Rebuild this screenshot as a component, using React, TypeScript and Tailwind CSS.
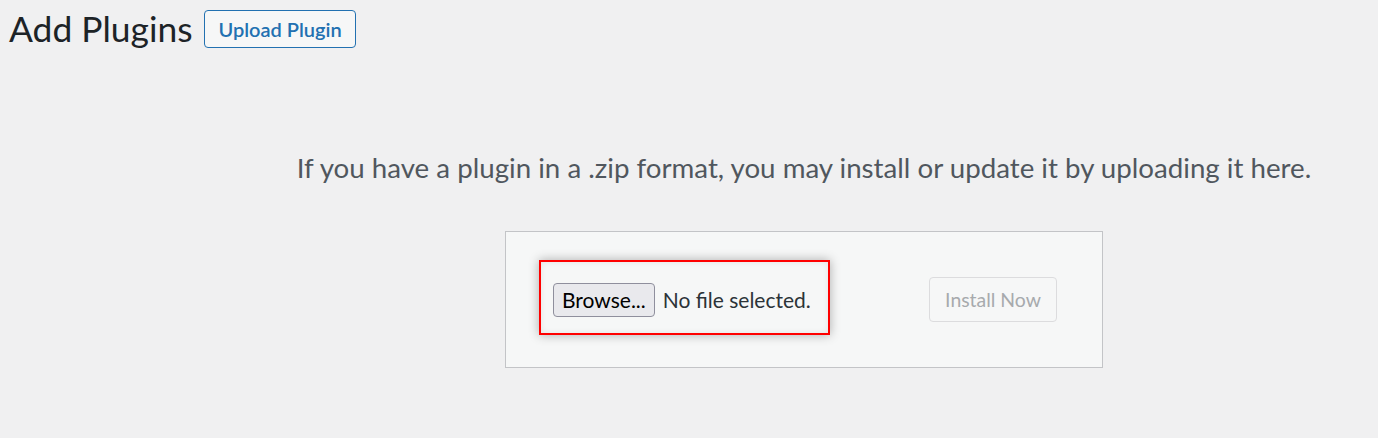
const font = { fontFamily: 'Lato, "Noto Sans", sans-serif' };

export default function App() {
  return (
    <div className="min-h-[438px] w-full bg-[#f0f0f1] text-[#1d2327]" style={font}>
      {/* Header */}
      <div className="flex items-center pl-[9px] pt-[10px]">
        <h1 className="text-[35.4px] font-normal leading-[38px]">Add Plugins</h1>
        <button className="ml-[12px] h-[38px] rounded-[4px] border border-[#2271b1] bg-[#f6f7f7] px-[13px] text-[20px] font-semibold text-[#2271b1]">
          Upload Plugin
        </button>
      </div>

      {/* Upload area */}
      <div className="flex flex-col items-center pl-[230px]">
        <p className="mt-[105px] text-[27.7px] leading-[30px] text-[#50575e]">
          If you have a plugin in a .zip format, you may install or update it by uploading it here.
        </p>

        <div className="mt-[48px] flex h-[137px] w-[598px] items-center justify-between border border-[#c3c4c7] bg-[#f6f7f7] pl-[33px] pr-[45px]">
          <div className="mb-[5px] flex h-[75px] w-[291px] items-center border-2 border-[#ff0000] pl-[12px] pt-[5px] shadow-[0_0_10px_rgba(0,0,0,0.3),inset_0_0_6px_rgba(0,0,0,0.08)]">
            <span className="flex h-[34px] items-center rounded-[4px] border border-[#8f8f9d] bg-[#e9e9ed] px-[8px] text-[21px] text-black">
              Browse...
            </span>
            <span className="ml-[8px] text-[21px] text-[#2c3338]">No file selected.</span>
          </div>
          <button className="h-[45px] w-[128px] rounded-[4px] border border-[#dcdcde] bg-[#f6f7f7] text-[19.4px] text-[#a7aaad]">
            Install Now
          </button>
        </div>
      </div>
    </div>
  );
}
